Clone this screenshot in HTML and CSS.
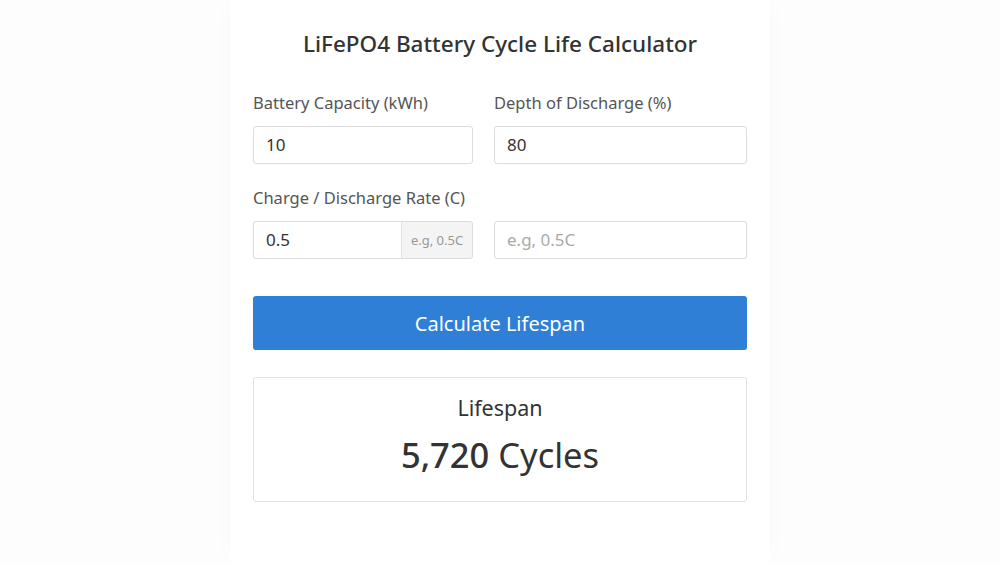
FILE: index.html
```html
<!DOCTYPE html>
<html lang="en">
<head>
	<meta charset="UTF-8">
	<title>LiFePO4 Battery Cycle Life Calculator</title>
	<link rel="stylesheet" href="styles.css">
</head>
<body>
	<div class="calc">
		<h1>LiFePO4 Battery Cycle Life Calculator</h1>
		<div class="grid">
			<div class="field">
				<label>Battery Capacity (kWh)</label>
				<div class="box">10</div>
			</div>
			<div class="field">
				<label>Depth of Discharge (%)</label>
				<div class="box">80</div>
			</div>
			<div class="field">
				<label>Charge / Discharge Rate (C)</label>
				<div class="box group">
					<span class="val">0.5</span>
					<span class="addon">e.g, 0.5C</span>
				</div>
			</div>
			<div class="field">
				<label class="empty">&nbsp;</label>
				<div class="box ph">e.g, 0.5C</div>
			</div>
		</div>
		<button class="btn">Calculate Lifespan</button>
		<div class="result">
			<div class="r-title">Lifespan</div>
			<div class="r-val"><b>5,720</b> Cycles</div>
		</div>
	</div>
</body>
</html>
```

FILE: styles.css
```css
*{margin: 0;padding: 0;box-sizing: border-box;}
body{background: #fdfdfd;font-family: "Noto Sans", "Open Sans", sans-serif;color: #333;}
.calc{width: 540px;margin: 0 auto;padding: 28px 23px 60px;background: #fff;box-shadow: 0 0 24px rgba(0,0,0,0.02);}
h1{font-size: 22.5px;font-weight: 500;text-align: center;color: #333;line-height: 32px;margin-bottom: 31px;}
.grid{display: grid;grid-template-columns: 220px 253px;column-gap: 21px;row-gap: 22px;}
.field label{display: block;font-size: 16.5px;color: #555;line-height: 23px;margin-bottom: 12px;}
.box{height: 38px;border: 1px solid #dcdcdc;border-radius: 3px;padding: 0 12px;font-size: 17px;line-height: 36px;color: #333;background: #fff;}
.box.ph{color: #aaa;}
.group{display: flex;padding: 0;overflow: hidden;}
.group .val{flex: 1;padding-left: 12px;}
.group .addon{width: 71px;background: #f4f4f4;border-left: 1px solid #e2e2e2;font-size: 13px;color: #999;text-align: center;}
.btn{display: block;width: 100%;height: 54px;margin-top: 37px;border: none;border-radius: 3px;background: #2f7fd7;color: #fff;font-family: inherit;font-size: 20px;}
.result{margin-top: 27px;height: 125px;border: 1px solid #e3e3e3;border-radius: 3px;text-align: center;padding-top: 16px;}
.r-title{font-size: 21.5px;line-height: 28px;color: #333;}
.r-val{font-size: 34.5px;line-height: 50px;margin-top: 8px;color: #333;}
.r-val b{font-weight: 500;}
```
